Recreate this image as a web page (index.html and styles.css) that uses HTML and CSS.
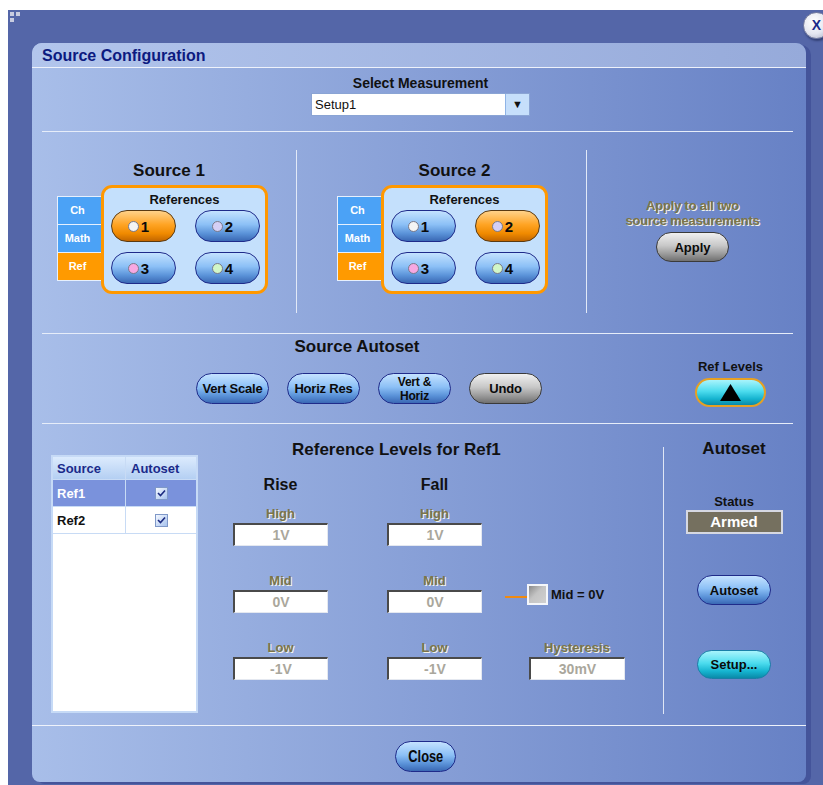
FILE: index.html
```html
<!DOCTYPE html>
<html lang="en">
<head>
    <meta charset="utf-8"/>
    <title>Source Configuration</title>
    <link rel="stylesheet" href="styles.css">
</head>
<body>
<div class="frame">
    <svg class="grip" width="12" height="11" viewBox="0 0 12 11">
        <rect x="0" y="0" width="4" height="4" fill="#c8cce0"/>
        <rect x="6" y="0" width="4" height="4" fill="#c8cce0"/>
        <rect x="0" y="6" width="4" height="4" fill="#c8cce0"/>
    </svg>
    <div class="close-x">X</div>

    <div class="panel">
        <div class="titlebar">Source Configuration</div>

        <div class="content">
            <section class="measure">
                <div class="measure-label">Select Measurement</div>
                <div class="select">
                    <span class="select-value">Setup1</span>
                    <span class="select-arrow">&#9660;</span>
                </div>
            </section>

            <section class="sources">
                <div class="src src1">
                    <div class="src-title">Source 1</div>
                    <div class="src-group">
                        <div class="tabs">
                            <div class="tab">Ch</div>
                            <div class="tab">Math</div>
                            <div class="tab on">Ref</div>
                        </div>
                        <div class="refbox">
                            <div class="refbox-title">References</div>
                            <div class="refgrid">
                                <div class="pill ref on"><i class="dot d1"></i>1</div>
                                <div class="pill ref"><i class="dot d2"></i>2</div>
                                <div class="pill ref"><i class="dot d3"></i>3</div>
                                <div class="pill ref"><i class="dot d4"></i>4</div>
                            </div>
                        </div>
                    </div>
                </div>

                <div class="src src2">
                    <div class="src-title">Source 2</div>
                    <div class="src-group">
                        <div class="tabs">
                            <div class="tab">Ch</div>
                            <div class="tab">Math</div>
                            <div class="tab on">Ref</div>
                        </div>
                        <div class="refbox">
                            <div class="refbox-title">References</div>
                            <div class="refgrid">
                                <div class="pill ref"><i class="dot d1"></i>1</div>
                                <div class="pill ref on"><i class="dot d2"></i>2</div>
                                <div class="pill ref"><i class="dot d3"></i>3</div>
                                <div class="pill ref"><i class="dot d4"></i>4</div>
                            </div>
                        </div>
                    </div>
                </div>

                <div class="src apply-col">
                    <div class="dim-text">Apply to all two<br/>source measurements</div>
                    <div class="pill grey apply">Apply</div>
                </div>
            </section>

            <section class="autoset">
                <div class="autoset-main">
                    <div class="sec-title autoset-title">Source Autoset</div>
                    <div class="autoset-btns">
                        <div class="pill blue btn">Vert Scale</div>
                        <div class="pill blue btn">Horiz Res</div>
                        <div class="pill blue btn two-line">Vert &amp;<br/>Horiz</div>
                        <div class="pill grey btn">Undo</div>
                    </div>
                </div>
                <div class="autoset-side">
                    <div class="small-title">Ref Levels</div>
                    <div class="pill cyan reflevels">
                        <svg width="21" height="17" viewBox="0 0 21 17"><polygon points="10.5,0 21,17 0,17" fill="#000"/></svg>
                    </div>
                </div>
            </section>

            <section class="levels">
                <div class="table">
                    <div class="trow thead">
                        <div class="tcell">Source</div>
                        <div class="tcell">Autoset</div>
                    </div>
                    <div class="trow sel">
                        <div class="tcell">Ref1</div>
                        <div class="tcell center"><span class="check"><svg width="9" height="8" viewBox="0 0 9 8"><path d="M1 4l2.5 2.5L8 1.5" stroke="#1b2a80" stroke-width="1.6" fill="none"/></svg></span></div>
                    </div>
                    <div class="trow">
                        <div class="tcell">Ref2</div>
                        <div class="tcell center"><span class="check"><svg width="9" height="8" viewBox="0 0 9 8"><path d="M1 4l2.5 2.5L8 1.5" stroke="#1b2a80" stroke-width="1.6" fill="none"/></svg></span></div>
                    </div>
                </div>

                <div class="levels-main">
                    <div class="sec-title levels-title">Reference Levels for Ref1</div>
                    <div class="levels-head">
                        <div class="col-head">Rise</div>
                        <div class="col-head">Fall</div>
                    </div>
                    <div class="fields">
                        <div class="field"><div class="flabel">High</div><div class="finput">1V</div></div>
                        <div class="field"><div class="flabel">High</div><div class="finput">1V</div></div>
                        <div class="extra"></div>

                        <div class="field"><div class="flabel">Mid</div><div class="finput">0V</div></div>
                        <div class="field"><div class="flabel">Mid</div><div class="finput">0V</div></div>
                        <div class="extra mid-zero">
                            <span class="orange-link"></span>
                            <span class="mid-box"></span>
                            <span class="mid-text">Mid = 0V</span>
                        </div>

                        <div class="field"><div class="flabel">Low</div><div class="finput">-1V</div></div>
                        <div class="field"><div class="flabel">Low</div><div class="finput">-1V</div></div>
                        <div class="extra field hyst"><div class="flabel">Hysteresis</div><div class="finput">30mV</div></div>
                    </div>
                </div>

                <div class="levels-side">
                    <div class="sec-title">Autoset</div>
                    <div class="small-title status-label">Status</div>
                    <div class="status">Armed</div>
                    <div class="pill blue side-btn autoset-btn">Autoset</div>
                    <div class="pill cyan side-btn setup-btn">Setup...</div>
                </div>
            </section>
        </div>

        <div class="footer">
            <div class="pill blue close-btn"><span>Close</span></div>
        </div>
    </div>
</div>
</body>
</html>
```

FILE: styles.css
```css
html, body {
    margin: 0;
    overflow: hidden;
}

body {
    background: #fff;
    font-family: "Liberation Sans", Arial, sans-serif;
    color: #111;
}

.frame {
    position: relative;
    margin: 10px 0 0 8px;
    width: 815px;
    height: 775px;
    box-sizing: border-box;
    padding: 33px 0 0 24px;
    background: #5466a8;
    overflow: hidden;
}

.grip {
    position: absolute;
    left: 2px;
    top: 2px;
}

.close-x {
    position: absolute;
    left: 795px;
    top: 2px;
    width: 25px;
    height: 25px;
    border-radius: 50%;
    border: 1px solid #7a80a0;
    background: radial-gradient(circle at 40% 35%, #ffffff 0%, #e4e6f0 55%, #a8acc4 100%);
    color: #1b2a8a;
    font: bold 14px/25px "Liberation Sans", Arial, sans-serif;
    text-align: center;
    box-shadow: 1px 2px 2px rgba(20, 30, 70, 0.5);
}

.panel {
    width: 774px;
    height: 739px;
    border-radius: 10px 10px 8px 8px;
    background: linear-gradient(to right, #a8bee9, #6781c5);
    box-shadow: 5px 2px 0 #44549a;
    display: flex;
    flex-direction: column;
}

.titlebar {
    height: 24px;
    border-bottom: 1px solid #eef2fb;
    border-radius: 10px 10px 0 0;
    background: linear-gradient(to right, #b2c5ec, #96aada);
    padding-left: 10px;
    font-size: 16px;
    line-height: 25px;
    font-weight: bold;
    color: #0c1a80;
}

.content {
    flex: 1;
    padding: 0 13px 0 10px;
    display: flex;
    flex-direction: column;
}

/* select measurement */
.measure {
    height: 63px;
    border-bottom: 1px solid #e6edf9;
    display: flex;
    flex-direction: column;
    align-items: center;
    padding-left: 6px;
}

.measure-label {
    margin-top: 7px;
    font-size: 14px;
    line-height: 16px;
    font-weight: bold;
}

.select {
    margin-top: 2px;
    width: 219px;
    height: 23px;
    box-sizing: border-box;
    border: 1px solid #8aa4d4;
    background: #fff;
    display: flex;
}

.select-value {
    flex: 1;
    padding-left: 3px;
    font-size: 13px;
    line-height: 21px;
}

.select-arrow {
    width: 23px;
    background: #c6dffb;
    border-left: 1px solid #8fb4e6;
    font-size: 11px;
    line-height: 21px;
    text-align: center;
}

/* sources */
.sources {
    height: 201px;
    border-bottom: 1px solid #e6edf9;
    display: grid;
    grid-template-columns: 254px 290px 1fr;
}

.src {
    margin-top: 18px;
    height: 163px;
    padding-top: 11px;
    box-sizing: border-box;
}

.src2, .apply-col {
    border-left: 1px solid #e2e9f7;
}

.src-title {
    font-size: 17px;
    line-height: 20px;
    font-weight: bold;
    text-align: center;
}

.src2 .src-title {
    padding-left: 26px;
}

.src-group {
    display: flex;
    margin-top: 4px;
    margin-left: 15px;
}

.src2 .src-group {
    margin-left: 40px;
}

.tabs {
    margin-top: 11px;
    width: 45px;
}

.tab {
    height: 29px;
    box-sizing: border-box;
    border: 1px solid #e6f0fe;
    margin-top: -1px;
    background: #4ba2f6;
    color: #fff;
    font-size: 11px;
    font-weight: bold;
    line-height: 27px;
    text-align: center;
    padding-right: 4px;
}

.tab:first-child {
    margin-top: 0;
}

.tab.on {
    background: #ff9a00;
}

.refbox {
    margin-left: -1px;
    width: 167px;
    height: 109px;
    box-sizing: border-box;
    border: 3px solid #ff9800;
    border-radius: 11px;
    background: #c4e0fc;
}

.refbox-title {
    margin-top: 4px;
    font-size: 13px;
    line-height: 15px;
    font-weight: bold;
    text-align: center;
}

.refgrid {
    display: grid;
    grid-template-columns: 65px 65px;
    column-gap: 19px;
    row-gap: 10px;
    margin: 3px 0 0 7px;
}

/* pill buttons */
.pill {
    display: flex;
    align-items: center;
    justify-content: center;
    box-sizing: border-box;
    border-radius: 16px;
    font-weight: bold;
    color: #0a0a0a;
}

.pill.ref,
.pill.blue {
    border: 1.5px solid #1f2b8a;
    background: linear-gradient(to bottom, #c4e2ff 0%, #8cc0f6 45%, #5a92d8 75%, #3a68b4 100%);
}

.pill.ref.on {
    border-color: #5a3a12;
    background: linear-gradient(to bottom, #ffd28a 0%, #ffa424 45%, #f08a00 75%, #c26600 100%);
}

.pill.grey {
    border: 1.5px solid #3a3a3a;
    background: linear-gradient(to bottom, #f0f0f0 0%, #c8c8c8 45%, #9a9a9a 75%, #707070 100%);
}

.pill.cyan {
    border: 1.5px solid #1a7fa8;
    background: linear-gradient(to bottom, #a8f4fc 0%, #4cdcee 45%, #16b4d0 75%, #0a8aa8 100%);
}

.pill.ref {
    width: 65px;
    height: 32px;
    font-size: 15px;
    padding-right: 10px;
}

.dot {
    width: 9px;
    height: 9px;
    border-radius: 50%;
    border: 1px solid #7a7a8a;
    margin-right: 2px;
}

.d1 { background: #f4f4f4; }
.d2 { background: #d4cff6; }
.d3 { background: #f7a8e2; }
.d4 { background: #d2f7c8; }

.apply-col {
    padding-top: 48px;
    padding-left: 5px;
    display: flex;
    flex-direction: column;
    align-items: center;
}

.dim-text {
    font-size: 13px;
    line-height: 15px;
    font-weight: bold;
    text-align: center;
    color: #7c7448;
    text-shadow: 1px 1px 0 #f4f4ec;
    letter-spacing: -0.2px;
}

.pill.apply {
    margin-top: 4px;
    width: 73px;
    height: 30px;
    font-size: 13px;
}

/* source autoset */
.autoset {
    height: 89px;
    border-bottom: 1px solid #e6edf9;
    display: grid;
    grid-template-columns: 621px 1fr;
}

.sec-title {
    font-size: 17px;
    line-height: 18px;
    font-weight: bold;
}

.autoset-title {
    padding-top: 4px;
    padding-left: 9px;
    text-align: center;
}

.autoset-btns {
    display: flex;
    gap: 18px;
    margin-top: 17px;
    padding-left: 154px;
}

.pill.btn {
    width: 73px;
    height: 31px;
    font-size: 13px;
    letter-spacing: -0.2px;
}

.pill.two-line {
    font-size: 12px;
    line-height: 14px;
    text-align: center;
}

.autoset-side {
    padding-top: 25px;
    padding-left: 5px;
    display: flex;
    flex-direction: column;
    align-items: center;
}

.small-title {
    font-size: 13px;
    line-height: 16px;
    font-weight: bold;
}

.pill.reflevels {
    margin-top: 3px;
    width: 71px;
    height: 29px;
    border: 2px solid #e6a024;
}

/* reference levels */
.levels {
    flex: 1;
    display: grid;
    grid-template-columns: 156px 465px 1fr;
}

.table {
    margin: 31px 0 0 9px;
    width: 147px;
    height: 258px;
    box-sizing: border-box;
    border: 2px solid #c6daf6;
    background: #fff;
}

.trow {
    display: grid;
    grid-template-columns: 73px 1fr;
    height: 26px;
    border-bottom: 1px solid #c8dbf5;
    font-size: 13px;
    font-weight: bold;
}

.trow.thead {
    height: 22px;
    background: linear-gradient(to bottom, #dcebfd, #b4cff2);
    color: #1a2a8a;
}

.trow.sel {
    background: #7a92dc;
    color: #fff;
}

.tcell {
    padding-left: 4px;
    display: flex;
    align-items: center;
    border-right: 1px solid #c8dbf5;
}

.tcell:last-child {
    border-right: none;
}

.thead .tcell:last-child {
    padding-left: 5px;
}

.tcell.center {
    justify-content: center;
    padding-left: 0;
}

.check {
    width: 13px;
    height: 13px;
    box-sizing: border-box;
    border: 1px solid #7f98c8;
    background: linear-gradient(to bottom right, #f4f8ff, #a6c2ee);
    display: flex;
    align-items: center;
    justify-content: center;
}

.levels-title {
    padding-top: 17px;
    padding-left: 94px;
}

.levels-head {
    display: grid;
    grid-template-columns: 95px 95px;
    column-gap: 59px;
    margin: 16px 0 0 35px;
}

.col-head {
    font-size: 16px;
    line-height: 20px;
    font-weight: bold;
    text-align: center;
}

.fields {
    display: grid;
    grid-template-columns: 95px 95px 120px;
    column-gap: 59px;
    row-gap: 28px;
    margin: 12px 0 0 35px;
}

.fields > .extra {
    margin-left: -36px;
    width: 120px;
    justify-self: start;
}

.field {
    display: flex;
    flex-direction: column;
    align-items: center;
}

.flabel {
    font-size: 13px;
    line-height: 14px;
    font-weight: bold;
    color: #7c7448;
    text-shadow: 1px 1px 0 #f4f4ec;
}

.finput {
    margin-top: 2px;
    width: 95px;
    height: 23px;
    box-sizing: border-box;
    background: #fff;
    border-top: 2px solid #4a4a4a;
    border-left: 2px solid #4a4a4a;
    border-right: 1px solid #e4e8f0;
    border-bottom: 1px solid #e4e8f0;
    color: #aaa79c;
    font-size: 14px;
    font-weight: bold;
    line-height: 20px;
    text-align: center;
}

.fields > .hyst {
    padding-left: 24px;
    box-sizing: border-box;
}

.hyst .finput {
    width: 96px;
}

.mid-zero {
    display: flex;
    align-items: center;
    margin-top: 10px;
    height: 21px;
}

.orange-link {
    width: 22px;
    height: 2px;
    margin-top: 5px;
    background: #f08a10;
}

.mid-box {
    width: 21px;
    height: 21px;
    box-sizing: border-box;
    border: 2px solid #f4f6fa;
    background: linear-gradient(135deg, #8a8a8a 0%, #c4c4c4 45%, #d0d0d0 100%);
}

.mid-text {
    margin-left: 3px;
    font-size: 13px;
    font-weight: bold;
    white-space: nowrap;
}

.levels-side {
    padding-top: 16px;
    padding-left: 12px;
    display: flex;
    flex-direction: column;
    align-items: center;
    background: linear-gradient(#dfe6f5, #dfe6f5) no-repeat 0 23px / 1px 267px;
}

.status-label {
    margin-top: 36px;
}

.status {
    width: 97px;
    height: 24px;
    box-sizing: border-box;
    border: 2px solid #d6d8e2;
    background: #75705f;
    color: #fff;
    font-size: 15px;
    font-weight: bold;
    line-height: 20px;
    text-align: center;
}

.pill.side-btn {
    width: 74px;
    font-size: 13px;
}

.autoset-btn {
    margin-top: 41px;
    height: 30px;
}

.setup-btn {
    margin-top: 45px;
    height: 29px;
}

/* footer */
.footer {
    height: 57px;
    border-top: 1px solid #eef2fb;
    padding-top: 15px;
    padding-left: 13px;
    box-sizing: border-box;
    display: flex;
    justify-content: center;
}

.pill.close-btn {
    width: 61px;
    height: 31px;
    font-size: 16px;
}

.close-btn span {
    display: inline-block;
    transform: scaleX(0.8);
}
```
